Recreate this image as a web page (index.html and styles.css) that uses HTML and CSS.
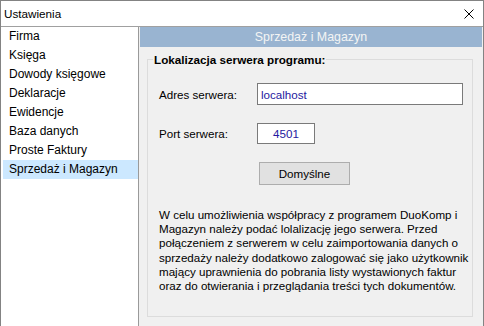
FILE: index.html
```html
<!DOCTYPE html>
<html lang="pl">
<head>
    <meta charset="UTF-8">
    <title>Ustawienia</title>
    <link rel="stylesheet" href="styles.css">
</head>
<body>
    <div class="window">
        <div class="titlebar">
            <span class="title">Ustawienia</span>
            <svg class="close" width="10" height="10" viewBox="0 0 10 10">
                <path d="M0.5 0.5 L9.5 9.5 M9.5 0.5 L0.5 9.5" stroke="#000" stroke-width="1" fill="none"/>
            </svg>
        </div>
        <div class="content">
            <ul class="nav">
                <li>Firma</li>
                <li>Księga</li>
                <li>Dowody księgowe</li>
                <li>Deklaracje</li>
                <li>Ewidencje</li>
                <li>Baza danych</li>
                <li>Proste Faktury</li>
                <li class="selected">Sprzedaż i Magazyn</li>
            </ul>
            <div class="panel">
                <div class="panel-header">Sprzedaż i Magazyn</div>
                <fieldset class="group">
                    <legend>Lokalizacja serwera programu:</legend>
                    <div class="row">
                        <label for="address">Adres serwera:</label>
                        <input id="address" class="field field-wide" type="text" value="localhost">
                    </div>
                    <div class="row">
                        <label for="port">Port serwera:</label>
                        <input id="port" class="field field-port" type="text" value="4501">
                    </div>
                    <button class="button">Domyślne</button>
                    <p class="info">W celu umożliwienia współpracy z programem DuoKomp i<br>
                        Magazyn należy podać lolalizację jego serwera. Przed<br>
                        połączeniem z serwerem w celu zaimportowania danych o<br>
                        sprzedaży należy dodatkowo zalogować się jako użytkownik<br>
                        mający uprawnienia do pobrania listy wystawionych faktur<br>
                        oraz do otwierania i przeglądania treści tych dokumentów.</p>
                </fieldset>
            </div>
        </div>
    </div>
</body>
</html>
```

FILE: styles.css
```css
body {
    margin: 0;
    font-family: "Liberation Sans", Arial, sans-serif;
    font-size: 12px;
    color: #000;
}
.window {
    width: 484px;
    height: 326px;
    box-sizing: border-box;
    border: 1px solid #838383;
    border-bottom: none;
    background-color: #f0f0f0;
    display: flex;
    flex-direction: column;
    overflow: hidden;
}
.titlebar {
    height: 25px;
    flex: none;
    background-color: #fff;
    border-bottom: 1px solid #a0a0a0;
    display: flex;
    align-items: center;
    justify-content: space-between;
    padding: 0 9px 0 3px;
}
.title {
    font-size: 11.7px;
}
.content {
    flex: 1;
    display: flex;
}
.nav {
    flex: none;
    width: 138px;
    box-sizing: border-box;
    margin: 0;
    padding: 0 0 0 2px;
    list-style: none;
    background-color: #fff;
    border-right: 1px solid #9a9a9a;
}
.nav li {
    height: 19px;
    line-height: 19px;
    padding-left: 6px;
    white-space: nowrap;
}
.nav li.selected {
    background-color: #cce8ff;
}
.panel {
    flex: 1;
    min-width: 0;
    padding: 0 1px;
    display: flex;
    flex-direction: column;
    font-size: 11.6px;
}
.panel-header {
    height: 20px;
    line-height: 20px;
    background-color: #99b4d1;
    color: #f4f4f4;
    text-align: center;
    font-size: 12.4px;
}
.group {
    min-width: 0;
    margin: 5px 9px 0 7px;
    padding: 16px 8px 0 11px;
    border: 1px solid #dcdcdc;
    height: 265px;
    box-sizing: border-box;
}
.group legend {
    font-weight: bold;
    font-size: 11.7px;
    line-height: 15px;
    padding: 0 1px;
    margin-left: -6px;
}
.row {
    display: flex;
    align-items: center;
    margin-bottom: 18px;
}
.row label {
    width: 98px;
}
.field {
    box-sizing: border-box;
    margin: 0;
    border: 1px solid #7a7a7a;
    background-color: #fff;
    font-family: "Liberation Sans", Arial, sans-serif;
    font-size: 11.6px;
    color: #2418a0;
    padding: 0 3px;
    outline: none;
}
.field-wide {
    width: 206px;
    height: 22px;
}
.field-port {
    width: 58px;
    height: 21px;
    text-align: center;
}
.button {
    display: block;
    width: 91px;
    height: 23px;
    margin: 2px 0 0 100px;
    background-color: #e1e1e1;
    border: 1px solid #adadad;
    font-family: "Liberation Sans", Arial, sans-serif;
    font-size: 11.6px;
    color: #000;
    padding: 0;
}
.info {
    margin: 23px 0 0;
    line-height: 14.2px;
    white-space: nowrap;
}
```
